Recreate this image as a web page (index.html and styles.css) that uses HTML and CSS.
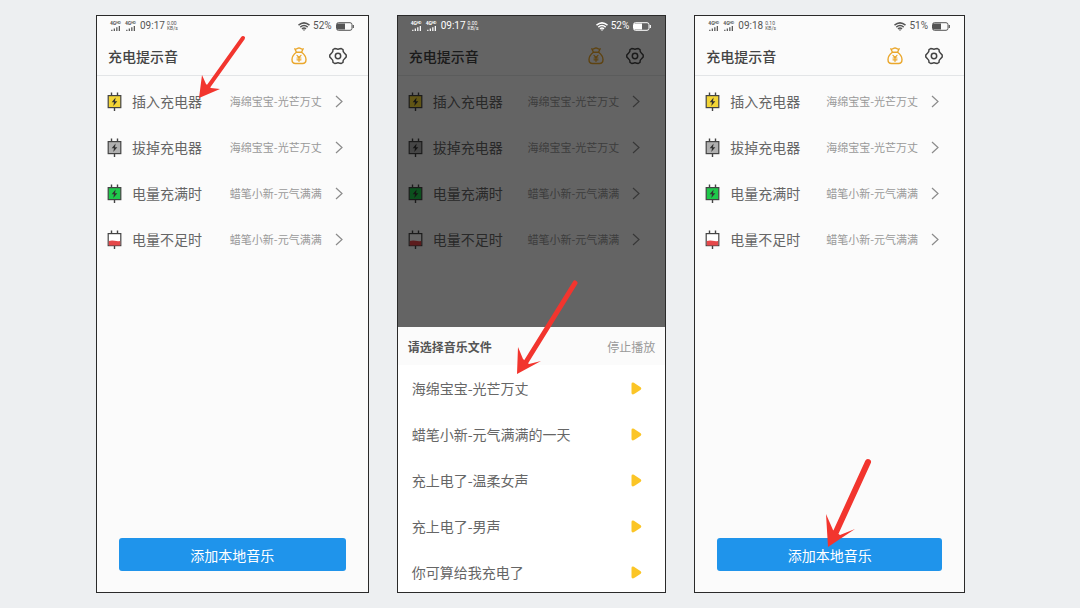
FILE: index.html
```html
<!DOCTYPE html>
<html lang="zh-CN">
  <head>
    <meta charset="utf-8">
    <meta name="viewport" content="width=device-width">
    <title>充电提示音</title>
    <link rel="stylesheet" href="styles.css">
  </head>
<body>

<svg width="0" height="0" class="symbols">
  <symbol id="bars" viewBox="0 0 12 6">
    <path d="M1 6V4.500M4 6V3M7 6V1.500M10 6V0" stroke="currentColor" stroke-width="1.500"/>
  </symbol>
  <symbol id="wifi" viewBox="0 0 12 9">
    <g fill="none" stroke="currentColor" stroke-width="1.500">
      <path d="M.5 3.200Q6-1.400 11.500 3.200M2.300 5.100Q6 2 9.700 5.100M4 6.900Q6 5.200 8 6.900"/>
    </g>
    <path d="M4.800 7.600H7.200L6 9Z" fill="currentColor"/>
  </symbol>
  <symbol id="battery" viewBox="0 0 18 9">
    <rect x=".5" y=".7" width="15.500" height="7.600" rx="2" fill="none" stroke="currentColor"/>
    <path d="M1 1.500H9V7.500H1Z" fill="currentColor"/>
    <path d="M17.300 3V6" stroke="currentColor" stroke-width="1.200"/>
  </symbol>
  <symbol id="bag" viewBox="0 0 16 18">
    <g fill="none" stroke="#eaa72c" stroke-width="1.400" stroke-linejoin="round" stroke-linecap="round">
      <path d="M5.500 5.200L3.800 1.800Q5.300 2.500 6.300 1.500Q8 .5 9.700 1.500Q10.700 2.500 12.200 1.800L10.500 5.200M5 5.200H11M5.500 5.300Q1 8.500 1 12.500Q1 16.500 4.500 16.500H11.500Q15 16.500 15 12.500Q15 8.500 10.500 5.300"/>
      <path d="M6 8.300L8 10.500L10 8.300M8 10.500V14.500M6 11H10M6 12.800H10" stroke-width="1.200"/>
    </g>
  </symbol>
  <symbol id="gear" viewBox="0 0 18 18">
    <g fill="none" stroke="#444" stroke-width="1.500" stroke-linejoin="round">
      <path d="M5.800 1.500L7 1.700Q9 2.800 11 1.700L12.200 1.500L14 2.700Q13.900 5 15.300 6L17.200 8V10L15.300 12Q13.900 13 14 15.300L12.200 16.500L11 16.300Q9 15.200 7 16.300L5.800 16.500L4 15.300Q4.100 13 2.700 12L.8 10V8L2.700 6Q4.100 5 4 2.700Z"/>
      <circle cx="9" cy="9" r="2.700"/>
    </g>
  </symbol>
  <symbol id="plug" viewBox="0 0 15 19">
    <path d="M4.500 .5V4M10.500 .5V4M7.500 15V19" stroke="#444" stroke-width="1.400"/>
    <rect x="1.200" y="3.600" width="12.600" height="12" fill="currentColor" stroke="#444" stroke-width="1.200"/>
    <path d="M8.600 5.600L4.700 10.300H7L6.300 14L10.300 9.200H8Z" fill="#333"/>
  </symbol>
  <symbol id="plug-low" viewBox="0 0 15 19">
    <path d="M4.500 .5V4M10.500 .5V4M7.500 15V19" stroke="#444" stroke-width="1.400"/>
    <rect x="1.200" y="3.600" width="12.600" height="12" fill="#fff" stroke="#444" stroke-width="1.200"/>
    <path d="M1.800 11Q4.500 10 7.500 10.700T13.200 11V15.500H1.800Z" fill="#e5484a"/>
  </symbol>
  <symbol id="chevron" viewBox="0 0 8 13">
    <path d="M1 1L7 6.500L1 12" fill="none" stroke="#8b8b8b" stroke-width="1.200"/>
  </symbol>
  <symbol id="play" viewBox="0 0 11 13">
    <path d="M.5 2Q.5.5 2 .6Q3 .7 4 1.400L9.700 5.200Q11 6.500 9.700 7.800L4 11.600Q3 12.300 2 12.400Q.5 12.500.5 11Z" fill="#fbc526"/>
  </symbol>
</svg>

<main class="phones">

  <section class="phone">
    <div class="status">
      <span class="sim">4Gᴴᴰ<svg><use href="#bars"/></svg></span>
      <span class="sim">4Gᴴᴰ<svg><use href="#bars"/></svg></span>
      <span class="time">09:17</span>
      <span class="speed">0.00<br>KB/s</span>
      <svg class="wifi"><use href="#wifi"/></svg>
      <span class="percent">52%</span>
      <svg class="battery"><use href="#battery"/></svg>
    </div>
    <header class="bar">
      <h1>充电提示音</h1>
      <button class="icon-btn" aria-label="打赏"><svg class="bag"><use href="#bag"/></svg></button>
      <button class="icon-btn" aria-label="设置"><svg class="gear"><use href="#gear"/></svg></button>
    </header>
    <ul class="options">
      <li><button class="option"><svg class="plug yellow"><use href="#plug"/></svg><span class="name">插入充电器</span><span class="value">海绵宝宝-光芒万丈</span><svg class="chevron"><use href="#chevron"/></svg></button></li>
      <li><button class="option"><svg class="plug gray"><use href="#plug"/></svg><span class="name">拔掉充电器</span><span class="value">海绵宝宝-光芒万丈</span><svg class="chevron"><use href="#chevron"/></svg></button></li>
      <li><button class="option"><svg class="plug green"><use href="#plug"/></svg><span class="name">电量充满时</span><span class="value">蜡笔小新-元气满满</span><svg class="chevron"><use href="#chevron"/></svg></button></li>
      <li><button class="option"><svg class="plug"><use href="#plug-low"/></svg><span class="name">电量不足时</span><span class="value">蜡笔小新-元气满满</span><svg class="chevron"><use href="#chevron"/></svg></button></li>
    </ul>
    <button class="add-btn">添加本地音乐</button>
    <svg class="arrow arrow-option" viewBox="0 0 50 67">
      <path d="M46 5L11 54" stroke-width="4"/>
      <path class="head" d="M2 65L5 42L9 51L14 55L23 56Z"/>
    </svg>
  </section>

  <section class="phone">
    <div class="status light">
      <span class="sim">4Gᴴᴰ<svg><use href="#bars"/></svg></span>
      <span class="sim">4Gᴴᴰ<svg><use href="#bars"/></svg></span>
      <span class="time">09:17</span>
      <span class="speed">0.00<br>KB/s</span>
      <svg class="wifi"><use href="#wifi"/></svg>
      <span class="percent">52%</span>
      <svg class="battery"><use href="#battery"/></svg>
    </div>
    <header class="bar">
      <h1>充电提示音</h1>
      <button class="icon-btn" aria-label="打赏"><svg class="bag"><use href="#bag"/></svg></button>
      <button class="icon-btn" aria-label="设置"><svg class="gear"><use href="#gear"/></svg></button>
    </header>
    <ul class="options">
      <li><button class="option"><svg class="plug yellow"><use href="#plug"/></svg><span class="name">插入充电器</span><span class="value">海绵宝宝-光芒万丈</span><svg class="chevron"><use href="#chevron"/></svg></button></li>
      <li><button class="option"><svg class="plug gray"><use href="#plug"/></svg><span class="name">拔掉充电器</span><span class="value">海绵宝宝-光芒万丈</span><svg class="chevron"><use href="#chevron"/></svg></button></li>
      <li><button class="option"><svg class="plug green"><use href="#plug"/></svg><span class="name">电量充满时</span><span class="value">蜡笔小新-元气满满</span><svg class="chevron"><use href="#chevron"/></svg></button></li>
      <li><button class="option"><svg class="plug"><use href="#plug-low"/></svg><span class="name">电量不足时</span><span class="value">蜡笔小新-元气满满</span><svg class="chevron"><use href="#chevron"/></svg></button></li>
    </ul>
    <div class="overlay">
      <div class="sheet">
        <div class="sheet-header">
          <h2>请选择音乐文件</h2>
          <button class="stop-btn">停止播放</button>
        </div>
        <ul class="tracks">
          <li>海绵宝宝-光芒万丈<button class="icon-btn" aria-label="播放"><svg class="play"><use href="#play"/></svg></button></li>
          <li>蜡笔小新-元气满满的一天<button class="icon-btn" aria-label="播放"><svg class="play"><use href="#play"/></svg></button></li>
          <li>充上电了-温柔女声<button class="icon-btn" aria-label="播放"><svg class="play"><use href="#play"/></svg></button></li>
          <li>充上电了-男声<button class="icon-btn" aria-label="播放"><svg class="play"><use href="#play"/></svg></button></li>
          <li>你可算给我充电了<button class="icon-btn" aria-label="播放"><svg class="play"><use href="#play"/></svg></button></li>
        </ul>
      </div>
    </div>
    <svg class="arrow arrow-track" viewBox="0 0 66 98">
      <path d="M61 5L12 84" stroke-width="5"/>
      <path class="head" d="M3 96L4 69L9 81L15 86L27 83Z"/>
    </svg>
  </section>

  <section class="phone">
    <div class="status">
      <span class="sim">4Gᴴᴰ<svg><use href="#bars"/></svg></span>
      <span class="sim">4Gᴴᴰ<svg><use href="#bars"/></svg></span>
      <span class="time">09:18</span>
      <span class="speed">0.10<br>KB/s</span>
      <svg class="wifi"><use href="#wifi"/></svg>
      <span class="percent">51%</span>
      <svg class="battery"><use href="#battery"/></svg>
    </div>
    <header class="bar">
      <h1>充电提示音</h1>
      <button class="icon-btn" aria-label="打赏"><svg class="bag"><use href="#bag"/></svg></button>
      <button class="icon-btn" aria-label="设置"><svg class="gear"><use href="#gear"/></svg></button>
    </header>
    <ul class="options">
      <li><button class="option"><svg class="plug yellow"><use href="#plug"/></svg><span class="name">插入充电器</span><span class="value">海绵宝宝-光芒万丈</span><svg class="chevron"><use href="#chevron"/></svg></button></li>
      <li><button class="option"><svg class="plug gray"><use href="#plug"/></svg><span class="name">拔掉充电器</span><span class="value">海绵宝宝-光芒万丈</span><svg class="chevron"><use href="#chevron"/></svg></button></li>
      <li><button class="option"><svg class="plug green"><use href="#plug"/></svg><span class="name">电量充满时</span><span class="value">蜡笔小新-元气满满</span><svg class="chevron"><use href="#chevron"/></svg></button></li>
      <li><button class="option"><svg class="plug"><use href="#plug-low"/></svg><span class="name">电量不足时</span><span class="value">蜡笔小新-元气满满</span><svg class="chevron"><use href="#chevron"/></svg></button></li>
    </ul>
    <button class="add-btn">添加本地音乐</button>
    <svg class="arrow arrow-add" viewBox="0 0 50 93">
      <path d="M45 6L13 76" stroke-width="6"/>
      <path class="head" d="M5 91L3 58L10 74L17 79L32 73Z"/>
    </svg>
  </section>

</main>
</body>
</html>
```

FILE: styles.css
```css
* {
  box-sizing: border-box;
}

body {
  margin: 0;
  background-color: #edeff1;
  color: #666;
  font-family: "Noto Sans CJK SC", sans-serif;
  font-size: 14px;
  line-height: 20px;
}

h1, h2, ul {
  margin: 0;
  padding: 0;
  list-style: none;
}

button {
  padding: 0;
  border: unset;
  background: none;
  color: inherit;
  font: inherit;
  cursor: pointer;
}

svg {
  display: block;
  flex-shrink: 0;
}

.symbols {
  position: absolute;
}

.phones {
  display: grid;
  grid-template-columns: 273fr 270fr 271fr;
  gap: 28px;
  min-height: 100vh;
  padding: 15px 115px 15px 96px;
}

.phone {
  position: relative;
  display: flex;
  flex-direction: column;
  border: 1px solid #2a2a2a;
  background-color: #fbfbfb;
}

/* status bar */
.status {
  display: flex;
  align-items: center;
  height: 20px;
  padding: 0 14px 0 13px;
  color: #555;
  font-family: Roboto, sans-serif;
  font-size: 10px;
  line-height: 12px;
}
.status.light {
  position: relative;
  z-index: 2;
  color: #fff;
}
.sim {
  width: 15px;
  font-size: 5px;
  font-weight: bold;
  line-height: 5px;
}
.sim svg {
  width: 12px;
  height: 5px;
}
.speed {
  margin-left: 2px;
  font-size: 5px;
  line-height: 5px;
}
.wifi {
  width: 12px;
  height: 9px;
  margin-left: auto;
}
.percent {
  margin: 0 4px 0 3px;
}
.battery {
  width: 18px;
  height: 9px;
}

/* title bar */
.bar {
  display: flex;
  align-items: center;
  gap: 22px;
  height: 40px;
  padding: 0 21px 0 11px;
  border-bottom: 1px solid #e3e5e7;
}
.bar h1 {
  flex-grow: 1;
  color: #444;
  font-size: 14px;
  font-weight: 500;
}
.bag {
  width: 16px;
  height: 18px;
}
.gear {
  width: 18px;
  height: 18px;
}

.options {
  flex-grow: 1;
  padding-top: 2px;
}
.option {
  display: flex;
  align-items: center;
  width: 100%;
  height: 46px;
  padding: 0 25px 0 10px;
  text-align: left;
}
.plug {
  width: 15px;
  height: 19px;
  margin-right: 10px;
}
.yellow {
  color: #f3d536;
}
.gray {
  color: #b0b0b0;
}
.green {
  color: #1fc94b;
}
.name {
  flex-grow: 1;
}
.value {
  color: #999;
  font-size: 11px;
}
.chevron {
  width: 8px;
  height: 13px;
  margin-left: 13px;
}

.add-btn {
  height: 33px;
  margin: 0 22px 21px;
  border-radius: 3px;
  background-color: #1f94eb;
  color: #fff;
}

/* music picker */
.overlay {
  position: absolute;
  inset: 0;
  z-index: 1;
  display: flex;
  flex-direction: column;
  justify-content: flex-end;
  background-color: rgba(0, 0, 0, 0.6);
}
.sheet {
  height: 46%;
  overflow: hidden;
  background-color: #fff;
}
.sheet-header {
  display: flex;
  align-items: center;
  justify-content: space-between;
  height: 38px;
  padding: 2px 10px 0;
  background-color: #fbfbfb;
  font-size: 12px;
}
.sheet-header h2 {
  color: #555;
  font-size: 12px;
  font-weight: bold;
}
.stop-btn {
  color: #999;
}
.tracks li {
  display: flex;
  align-items: center;
  justify-content: space-between;
  height: 46px;
  padding: 0 23px 0 14px;
}
.play {
  width: 11px;
  height: 13px;
}

/* pointer arrows */
.arrow {
  position: absolute;
  z-index: 3;
  fill: none;
  stroke: #f2352e;
  stroke-linecap: round;
  pointer-events: none;
}
.arrow .head {
  fill: #f2352e;
  stroke: none;
}
.arrow-option {
  top: 17px;
  left: 100px;
  width: 50px;
}
.arrow-track {
  top: 262px;
  left: 116px;
  width: 66px;
}
.arrow-add {
  bottom: 43px;
  left: 128px;
  width: 50px;
}
```
